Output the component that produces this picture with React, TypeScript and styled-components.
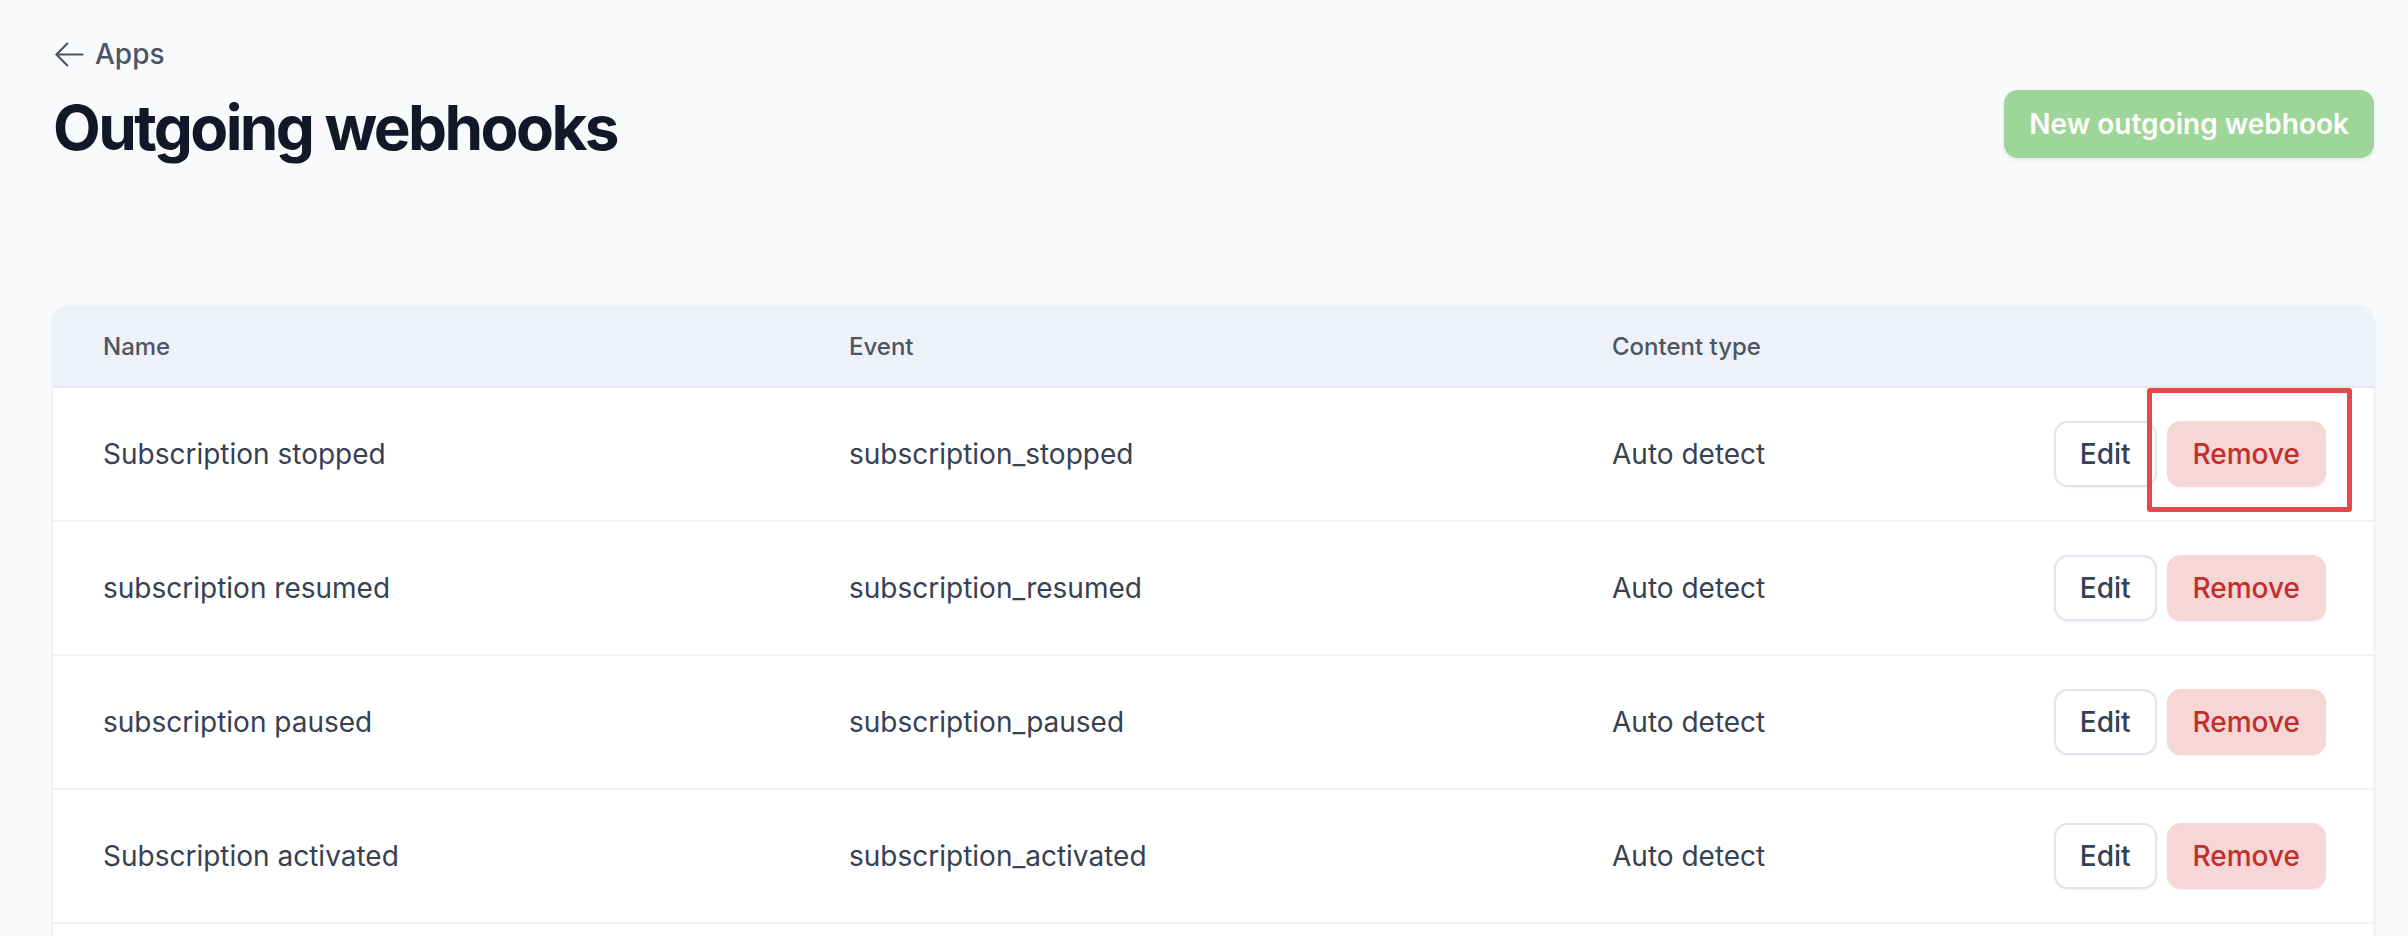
import React from 'react';
import styled, { createGlobalStyle } from 'styled-components';

const GlobalStyle = createGlobalStyle`
  * {
    box-sizing: border-box;
  }

  html, body {
    margin: 0;
    padding: 0;
    background: #f9fafc;
  }

  body {
    font-family: Inter, 'Liberation Sans', sans-serif;
    color: #374151;
    -webkit-font-smoothing: antialiased;
  }
`;

const Page = styled.div`
  min-height: 100vh;
  padding: 34px 34px 0 53px;
  background: #f9fafc;
`;

const BackLink = styled.a`
  display: flex;
  width: fit-content;
  align-items: center;
  gap: 8px;
  height: 40px;
  font-size: 28px;
  line-height: 40px;
  font-weight: 500;
  color: #4b5563;
  text-decoration: none;
  cursor: pointer;

  svg {
    margin-left: -1px;
  }
`;

const TitleRow = styled.div`
  display: flex;
  justify-content: space-between;
  align-items: flex-start;
  margin-top: 14px;
`;

const Title = styled.h1`
  margin: 0;
  font-size: 62px;
  line-height: 80px;
  font-weight: 700;
  letter-spacing: -2.6px;
  color: #111827;
`;

const PrimaryButton = styled.button`
  display: flex;
  align-items: center;
  height: 68px;
  margin-top: 2px;
  padding: 0 25px;
  border: none;
  border-radius: 14px;
  background: #9ed598;
  color: #ffffff;
  font-family: inherit;
  font-size: 28px;
  font-weight: 600;
  box-shadow: 0 2px 4px rgba(16, 24, 40, 0.08);
  cursor: pointer;
`;

const Card = styled.div`
  margin-top: 138px;
  padding-bottom: 40px;
  background: #ffffff;
  border-radius: 16px 16px 0 0;
  box-shadow: 0 1px 4px rgba(15, 23, 42, 0.07), 0 0 0 1px rgba(15, 23, 42, 0.025);
  overflow: hidden;
`;

const Grid = styled.div`
  display: grid;
  grid-template-columns: 746px 763px 1fr 365px;
  align-items: center;
`;

const HeaderRow = styled(Grid)`
  height: 82px;
  background: #eef2f8;
  border-bottom: 2px solid #e3e8f0;
`;

const HeaderCell = styled.div`
  padding: 0 48px 0 50px;
  font-size: 24px;
  font-weight: 500;
  color: #4b5563;
`;

const Row = styled(Grid)`
  height: 134px;
  border-bottom: 2px solid #eff2f6;
`;

const Cell = styled.div`
  padding: 0 48px 0 50px;
  font-size: 28px;
  line-height: 40px;
  color: #374151;
`;

const Actions = styled.div`
  position: relative;
  display: flex;
  justify-content: flex-end;
  align-items: center;
  gap: 10px;
  height: 100%;
  padding-right: 48px;
`;

const ActionButton = styled.button<{ $danger?: boolean }>`
  display: flex;
  align-items: center;
  height: 66px;
  padding: 0 24px;
  border-radius: 14px;
  border: 2px solid ${p => (p.$danger ? '#f6d6d6' : '#dfe5ee')};
  background: ${p => (p.$danger ? '#f6d6d6' : '#ffffff')};
  color: ${p => (p.$danger ? '#c22f2b' : '#334155')};
  font-family: inherit;
  font-size: 28px;
  font-weight: 500;
  box-shadow: 0 1px 2px rgba(16, 24, 40, 0.06);
  cursor: pointer;
`;

const Highlight = styled.div`
  position: absolute;
  top: 0;
  right: 22px;
  width: 205px;
  height: 124px;
  border: 5px solid #e5474d;
  border-radius: 3px;
  pointer-events: none;
`;

const ArrowLeft = () => (
  <svg width="35" height="35" viewBox="0 0 24 24" fill="none" stroke="currentColor" strokeWidth="1.5"
    strokeLinecap="round" strokeLinejoin="round">
    <path d="M10.5 19.5 3 12m0 0 7.5-7.5M3 12h18" />
  </svg>
);

interface Webhook {
  name: string;
  event: string;
  contentType: string;
}

const webhooks: Webhook[] = [
  { name: 'Subscription stopped', event: 'subscription_stopped', contentType: 'Auto detect' },
  { name: 'subscription resumed', event: 'subscription_resumed', contentType: 'Auto detect' },
  { name: 'subscription paused', event: 'subscription_paused', contentType: 'Auto detect' },
  { name: 'Subscription activated', event: 'subscription_activated', contentType: 'Auto detect' },
];

const App: React.FC = () => {
  return (
    <>
      <GlobalStyle />
      <Page>
        <BackLink>
          <ArrowLeft />
          Apps
        </BackLink>

        <TitleRow>
          <Title>Outgoing webhooks</Title>
          <PrimaryButton>New outgoing webhook</PrimaryButton>
        </TitleRow>

        <Card>
          <HeaderRow>
            <HeaderCell>Name</HeaderCell>
            <HeaderCell>Event</HeaderCell>
            <HeaderCell>Content type</HeaderCell>
            <HeaderCell />
          </HeaderRow>

          {webhooks.map((hook, i) => (
            <Row key={hook.event}>
              <Cell>{hook.name}</Cell>
              <Cell>{hook.event}</Cell>
              <Cell>{hook.contentType}</Cell>
              <Actions>
                <ActionButton>Edit</ActionButton>
                <ActionButton $danger>Remove</ActionButton>
                {i === 0 && <Highlight />}
              </Actions>
            </Row>
          ))}
        </Card>
      </Page>
    </>
  );
};

export default App;
